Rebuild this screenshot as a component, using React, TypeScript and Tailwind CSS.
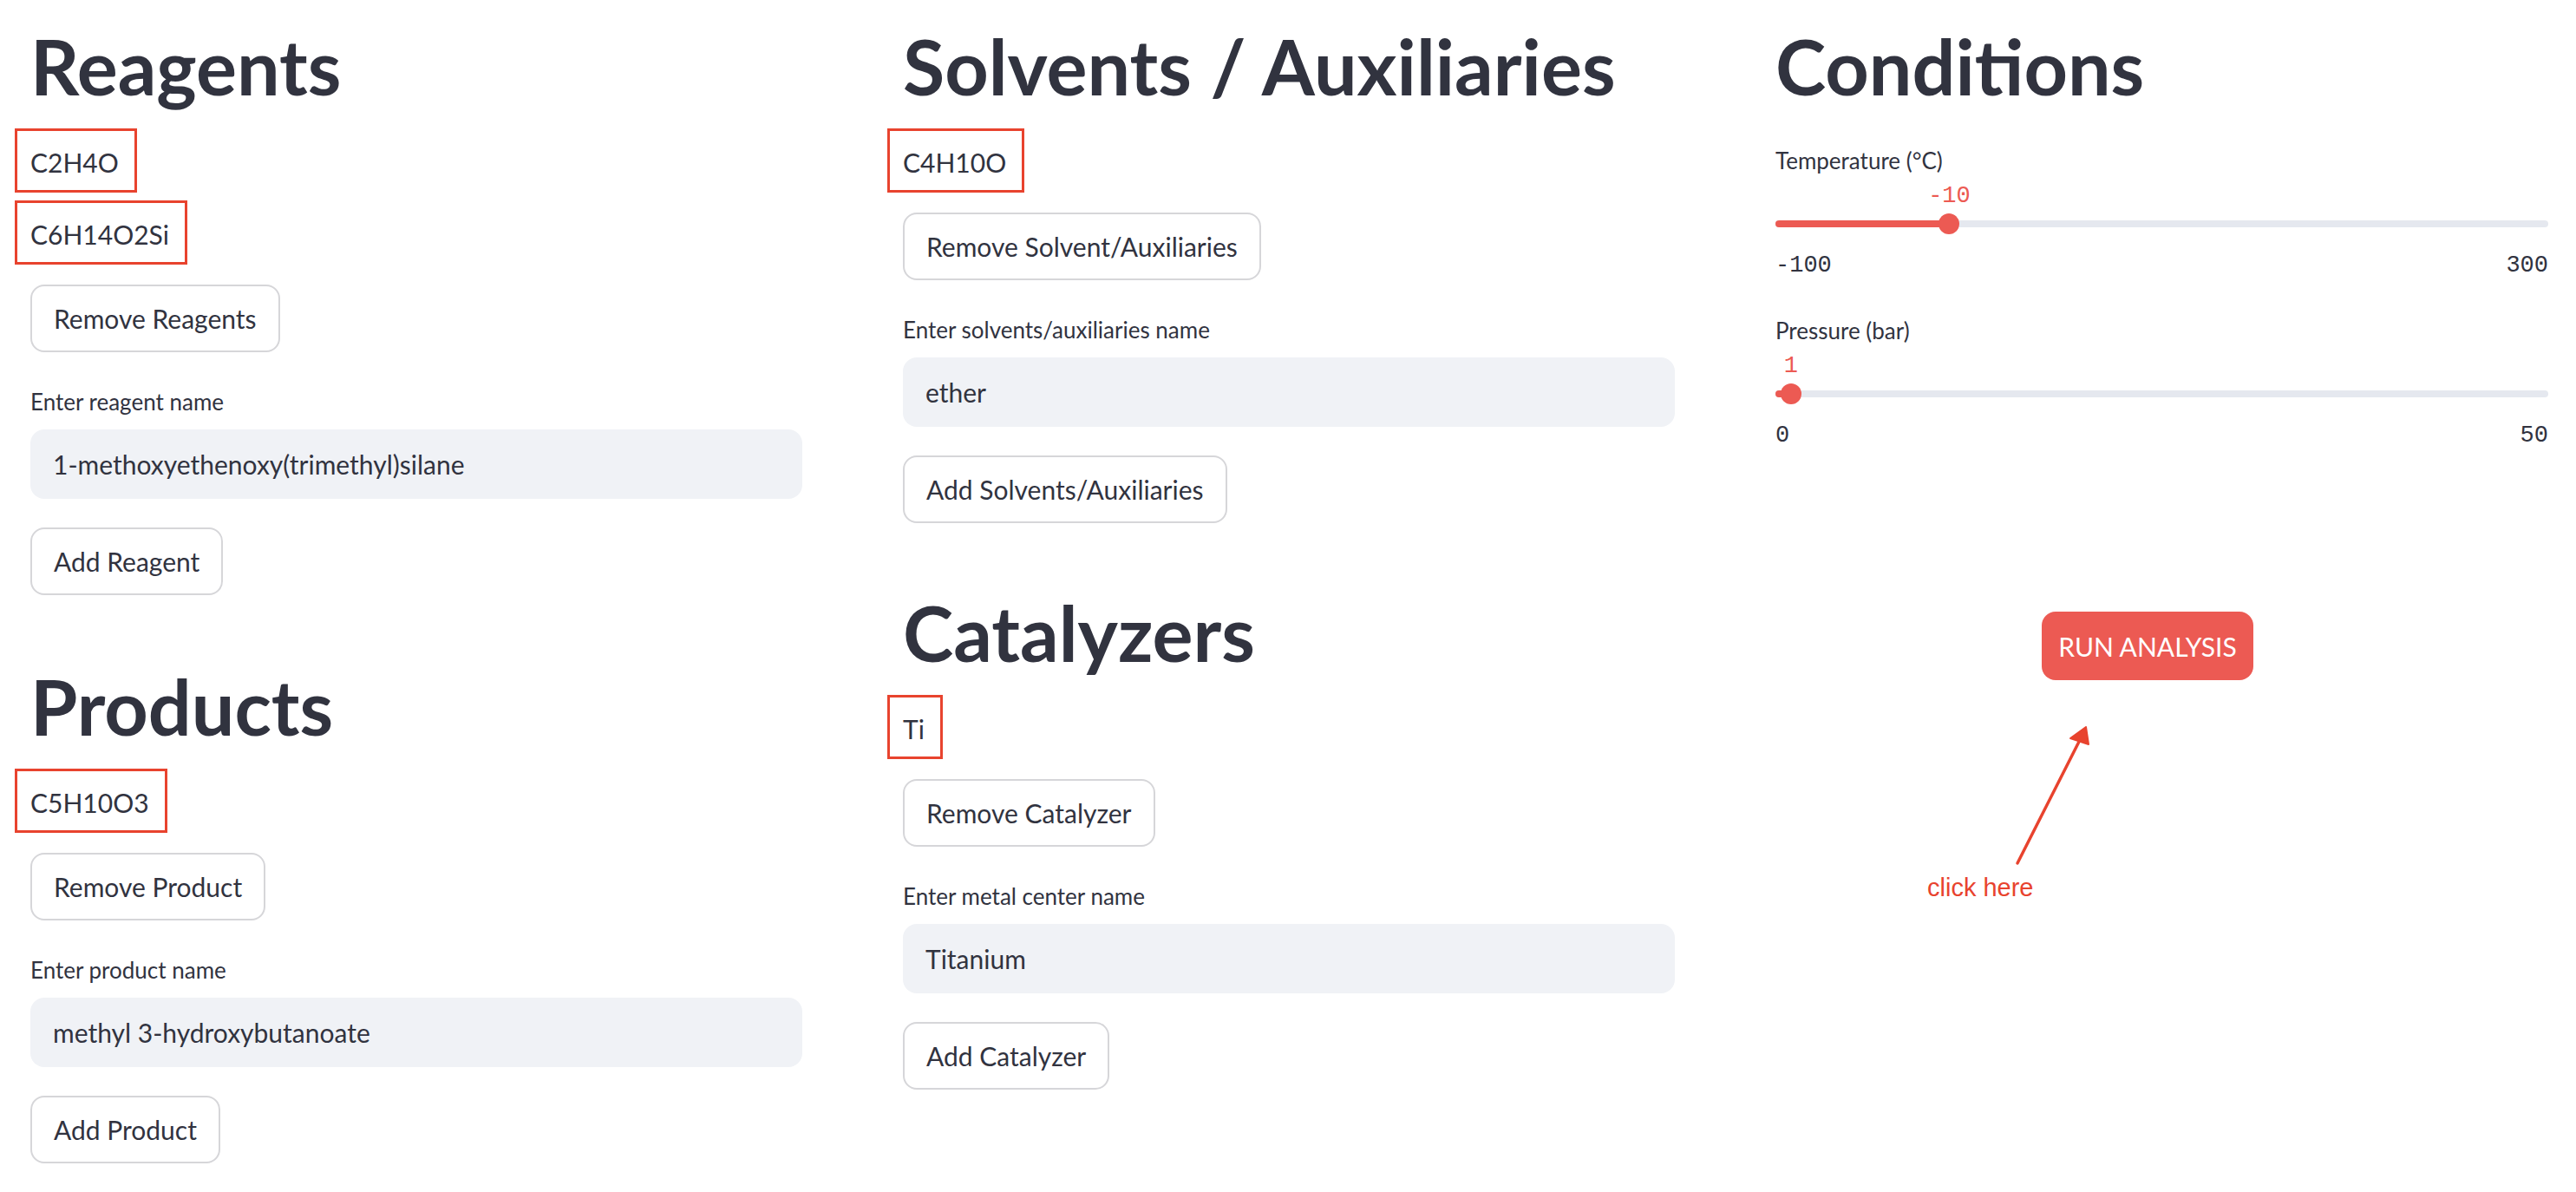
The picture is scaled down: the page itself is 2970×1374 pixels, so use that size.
import React from "react";

// Streamlit-ish reaction form, drawn at 2x scale

interface SectionProps {
  title: string;
  formulas: string[];
  removeLabel: string;
  fieldLabel: string;
  value: string;
  addLabel: string;
  className?: string;
}

const Heading = ({ children }: { children: React.ReactNode }) => (
  <h1 className="h-[100px] text-[88px] leading-[100px] font-bold text-[#31333f] whitespace-nowrap">
    {children}
  </h1>
);

const StButton = ({ children, className = "" }: { children: React.ReactNode; className?: string }) => (
  <button
    className={
      "flex h-[78px] items-center rounded-[16px] border-2 border-[#d6d6d9] bg-white px-[25px] text-[30px] leading-[48px] text-[#31333f] " +
      className
    }
  >
    {children}
  </button>
);

// red hand-drawn box around each parsed formula
const Formula = ({ text, first }: { text: string; first: boolean }) => (
  <div
    className={
      "-ml-[18px] border-[3px] border-[#e8432e] pl-[15px] pr-[18px] pt-[12px] pb-[8px] text-[30px] leading-[48px] text-[#31333f] " +
      (first ? "mt-[22px]" : "mt-[9px]")
    }
  >
    {text}
  </div>
);

const Section = ({ title, formulas, removeLabel, fieldLabel, value, addLabel, className = "" }: SectionProps) => (
  <div className={"flex flex-col items-start " + className}>
    <Heading>{title}</Heading>
    {formulas.map((f, i) => (
      <Formula key={f} text={f} first={i === 0} />
    ))}
    <StButton className="mt-[23px]">{removeLabel}</StButton>
    <label className="mt-[37px] h-[40px] text-[26px] leading-[40px] text-[#31333f]">{fieldLabel}</label>
    <div className="mt-[12px] flex h-[80px] w-full items-center rounded-[16px] bg-[#f0f2f6] px-[26px] text-[30px] leading-[48px] text-[#31333f]">
      {value}
    </div>
    <StButton className="mt-[33px]">{addLabel}</StButton>
  </div>
);

interface SliderProps {
  label: string;
  min: number;
  max: number;
  value: number;
  className?: string;
}

const Slider = ({ label, min, max, value, className = "" }: SliderProps) => {
  const pct = ((value - min) / (max - min)) * 100;
  return (
    <div className={"flex flex-col " + className}>
      <div className="h-[40px] text-[26px] leading-[40px] text-[#31333f]">{label}</div>
      <div className="relative h-[41px] pt-[5px]">
        <span
          className="absolute top-[5px] -translate-x-1/2 font-['Liberation_Mono',monospace] text-[27px] leading-[32px] text-[#ec5a53]"
          style={{ left: `${pct}%` }}
        >
          {value}
        </span>
      </div>
      <div className="flex h-[24px] items-center">
        <div className="relative h-[8px] w-full rounded-full bg-[#e5e8ef]">
          <div className="absolute left-0 top-0 h-[8px] rounded-full bg-[#ec5a53]" style={{ width: `${pct}%` }} />
          <div
            className="absolute top-1/2 h-[24px] w-[24px] -translate-x-1/2 -translate-y-1/2 rounded-full bg-[#ec5a53]"
            style={{ left: `${pct}%` }}
          />
        </div>
      </div>
      <div className="mt-[20px] flex justify-between font-['Liberation_Mono',monospace] text-[27px] leading-[32px] text-[#31333f]">
        <span>{min}</span>
        <span>{max}</span>
      </div>
    </div>
  );
};

export default function App() {
  return (
    <div className="min-h-[1374px] w-[2970px] bg-white font-['Lato','Noto_Sans',sans-serif]">
      <div className="grid grid-cols-[890px_890px_891px] gap-x-[116px] pl-[35px] pt-[26px]">
        {/* Left column */}
        <div className="flex flex-col">
          <Section
            title="Reagents"
            formulas={["C2H4O", "C6H14O2Si"]}
            removeLabel="Remove Reagents"
            fieldLabel="Enter reagent name"
            value="1-methoxyethenoxy(trimethyl)silane"
            addLabel="Add Reagent"
          />
          <Section
            title="Products"
            formulas={["C5H10O3"]}
            removeLabel="Remove Product"
            fieldLabel="Enter product name"
            value="methyl 3-hydroxybutanoate"
            addLabel="Add Product"
            className="mt-[78px]"
          />
        </div>

        {/* Middle column */}
        <div className="flex flex-col">
          <Section
            title="Solvents / Auxiliaries"
            formulas={["C4H10O"]}
            removeLabel="Remove Solvent/Auxiliaries"
            fieldLabel="Enter solvents/auxiliaries name"
            value="ether"
            addLabel="Add Solvents/Auxiliaries"
          />
          <Section
            title="Catalyzers"
            formulas={["Ti"]}
            removeLabel="Remove Catalyzer"
            fieldLabel="Enter metal center name"
            value="Titanium"
            addLabel="Add Catalyzer"
            className="mt-[76px]"
          />
        </div>

        {/* Right column */}
        <div className="flex flex-col">
          <Heading>Conditions</Heading>
          <Slider label="Temperature (°C)" min={-100} max={300} value={-10} className="mt-[39px]" />
          <Slider label="Pressure (bar)" min={0} max={50} value={1} className="mt-[39px]" />

          <button className="ml-[307px] mt-[187px] flex h-[79px] w-[244px] items-center justify-center rounded-[16px] bg-[#ec5a53] text-[30px] leading-[48px] text-white">
            RUN ANALYSIS
          </button>

          {/* annotation */}
          <svg className="ml-[273px] mt-[51px]" width="92" height="165" viewBox="0 0 92 165" fill="none">
            <path d="M6 160 L80 14" stroke="#e8432e" strokeWidth="3.5" strokeLinecap="round" />
            <path d="M85 3 L67 16 L88 23 Z" fill="#e8432e" stroke="#e8432e" strokeWidth="2" strokeLinejoin="round" />
          </svg>
          <div className="ml-[175px] mt-[6px] font-['Liberation_Sans',Arial,sans-serif] text-[29px] leading-[34px] text-[#e8432e]">
            click here
          </div>
        </div>
      </div>
    </div>
  );
}
